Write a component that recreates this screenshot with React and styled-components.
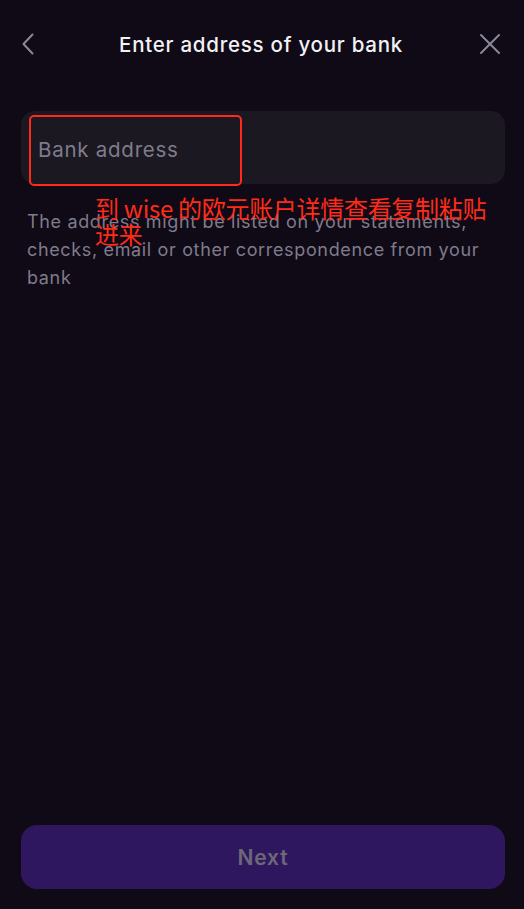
import React from "react";
import styled, { createGlobalStyle } from "styled-components";

const Global = createGlobalStyle`
  html, body { margin: 0; padding: 0; background: #0f0a15; }
  body { font-family: Inter, "Noto Sans", sans-serif; -webkit-font-smoothing: antialiased; }
  #root { min-height: 100vh; }
`;

const Screen = styled.div`
  position: relative;
  min-height: 909px;
  display: flex;
  flex-direction: column;
  padding: 0 19px 20px 21px;
  box-sizing: border-box;
  background: #0f0a15;
`;

const Header = styled.header`
  height: 88px;
  display: grid;
  grid-template-columns: 40px 1fr 40px;
  align-items: center;
  padding-right: 4px;
`;

const IconButton = styled.button`
  background: none;
  border: 0;
  padding: 0;
  display: flex;
  align-items: center;
  justify-content: ${(p) => (p.$end ? "flex-end" : "flex-start")};
  color: #8a8899;
  cursor: pointer;
`;

const Title = styled.h1`
  margin: 0;
  text-align: center;
  color: #f2f1f5;
  font-size: 20.5px;
  font-weight: 500;
  letter-spacing: 0.75px;
`;

const FieldWrap = styled.div`
  position: relative;
  margin-top: 23px;
`;

const Field = styled.div`
  height: 73px;
  border-radius: 14px;
  background: #1b1822;
  display: flex;
  align-items: center;
  padding: 3px 17px 0;
  box-sizing: border-box;
`;

const Placeholder = styled.span`
  font-size: 20.5px;
  color: #7f7c8d;
  letter-spacing: 0.75px;
`;

const Highlight = styled.div`
  position: absolute;
  left: 8px;
  top: 4px;
  width: 209px;
  height: 67px;
  border: 2.5px solid #ff2a1a;
  border-radius: 5px;
`;

const Note = styled.div`
  position: absolute;
  left: 74px;
  top: 84px;
  width: 410px;
  color: #ff2a1a;
  font-family: "Noto Sans CJK SC", Inter, sans-serif;
  font-size: 24px;
  line-height: 26px;
  letter-spacing: -0.3px;
`;

const Help = styled.p`
  margin: 24px 0 0 6px;
  color: #7f7b8c;
  font-size: 18px;
  line-height: 28px;
  letter-spacing: 0.65px;
`;

const Spacer = styled.div`
  flex: 1;
`;

const NextButton = styled.button`
  height: 64px;
  border: 0;
  border-radius: 16px;
  background: #2f1760;
  color: #6c6877;
  font-family: Inter, sans-serif;
  font-size: 21px;
  font-weight: 600;
  letter-spacing: 0.9px;
`;

export default function App() {
  return (
    <>
      <Global />
      <Screen>
        <Header>
          <IconButton aria-label="Back">
            <svg width="14" height="22" viewBox="0 0 14 22" fill="none">
              <path d="M11.5 1.5 L2.5 11 L11.5 20.5" stroke="currentColor" strokeWidth="2" strokeLinecap="round" strokeLinejoin="round" />
            </svg>
          </IconButton>
          <Title>Enter address of your bank</Title>
          <IconButton $end aria-label="Close">
            <svg width="22" height="22" viewBox="0 0 22 22" fill="none">
              <path d="M2 2 L20 20 M20 2 L2 20" stroke="currentColor" strokeWidth="2" strokeLinecap="round" />
            </svg>
          </IconButton>
        </Header>
        <FieldWrap>
          <Field>
            <Placeholder>Bank address</Placeholder>
          </Field>
          <Highlight />
          <Note>到 wise 的欧元账户详情查看复制粘贴进来</Note>
        </FieldWrap>
        <Help>
          The address might be listed on your statements, checks, email or other correspondence from your bank
        </Help>
        <Spacer />
        <NextButton>Next</NextButton>
      </Screen>
    </>
  );
}
